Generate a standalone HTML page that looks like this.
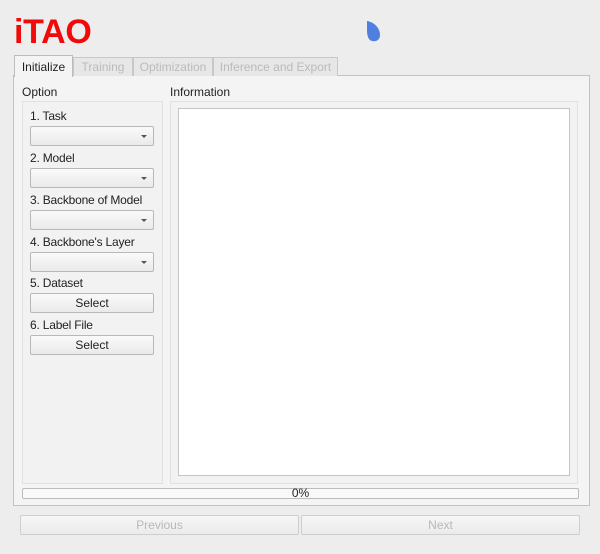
<!DOCTYPE html>
<html><head><style>
body{margin:0;width:600px;height:554px;background:#eeedee;font-family:"Liberation Sans",sans-serif;position:relative;overflow:hidden;font-size:12px;color:#222}
.a{position:absolute}
.title{left:14px;top:12px;font-size:34px;font-weight:bold;color:#f00a0a;letter-spacing:-0.3px;line-height:40px}
.tab{top:57px;height:19px;border:1px solid #c9c8c9;border-bottom:none;background:#e8e7e8;color:#bbb;text-align:center;line-height:19px;box-sizing:border-box}
.pane{left:13px;top:75px;width:577px;height:431px;border:1px solid #c3c2c3;background:#f5f4f5;box-sizing:border-box}
.box{border:1px solid #e2e1e2;background:#f3f2f3;box-sizing:border-box}
.combo{left:30px;width:124px;height:20px;border:1px solid #b9b8b9;border-radius:2px;background:linear-gradient(#fafafa,#ebeaeb);box-sizing:border-box}
.combo:after{content:"";position:absolute;right:6px;top:8px;border-left:3px solid transparent;border-right:3px solid transparent;border-top:3px solid #555}
.lbl{left:30px;font-size:12px;letter-spacing:-0.2px}
.btn{left:30px;width:124px;height:20px;border:1px solid #b9b8b9;border-radius:2px;background:linear-gradient(#fafafa,#ebeaeb);box-sizing:border-box;text-align:center;line-height:18px}
.nb{top:515px;height:20px;border:1px solid #cfcecf;border-radius:2px;background:linear-gradient(#f6f6f6,#ecebec);box-sizing:border-box;text-align:center;line-height:18px;color:#b8b8b8}
</style></head><body>
<div class="a title">iTAO</div>
<svg class="a" style="left:364px;top:19px" width="18" height="24" viewBox="0 0 18 24"><path d="M3 2 C10 3 16 9 16 16 C16 21 12 23 8 22 C4 21 3 16 3 11 Z" fill="#4f7fe0"/></svg>
<div class="a pane"></div>
<div class="a tab" style="left:14px;top:55px;width:59px;height:22px;background:#f5f4f5;color:#222;border-color:#bdbcbd;line-height:22px">Initialize</div>
<div class="a tab" style="left:73px;width:60px">Training</div>
<div class="a tab" style="left:133px;width:80px">Optimization</div>
<div class="a tab" style="left:213px;width:125px">Inference and Export</div>
<div class="a" style="left:22px;top:85px">Option</div>
<div class="a" style="left:170px;top:85px">Information</div>
<div class="a box" style="left:22px;top:101px;width:141px;height:383px"></div>
<div class="a box" style="left:170px;top:101px;width:408px;height:383px"></div>
<div class="a" style="left:178px;top:108px;width:392px;height:368px;background:#fff;border:1px solid #c6c5c6;box-sizing:border-box"></div>
<div class="a lbl" style="top:109px">1. Task</div>
<div class="a combo" style="top:126px"></div>
<div class="a lbl" style="top:151px">2. Model</div>
<div class="a combo" style="top:168px"></div>
<div class="a lbl" style="top:193px">3. Backbone of Model</div>
<div class="a combo" style="top:210px"></div>
<div class="a lbl" style="top:235px">4. Backbone's Layer</div>
<div class="a combo" style="top:252px"></div>
<div class="a lbl" style="top:276px">5. Dataset</div>
<div class="a btn" style="top:293px">Select</div>
<div class="a lbl" style="top:318px">6. Label File</div>
<div class="a btn" style="top:335px">Select</div>
<div class="a" style="left:22px;top:488px;width:557px;height:11px;border:1px solid #bdbcbd;border-radius:2px;background:#f9f9f9;box-sizing:border-box;text-align:center;font-size:12px;line-height:9px">0%</div>
<div class="a nb" style="left:20px;width:279px">Previous</div>
<div class="a nb" style="left:301px;width:279px">Next</div>
</body></html>
